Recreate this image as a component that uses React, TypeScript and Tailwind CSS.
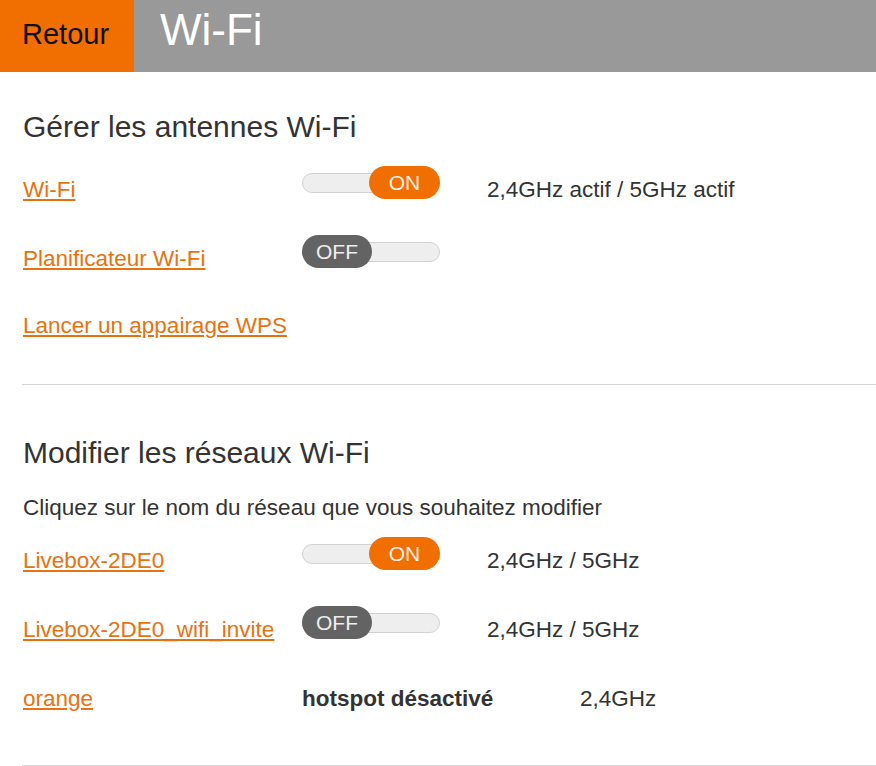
import React from "react";

function Toggle({ on }: { on: boolean }) {
  return (
    <div className="relative w-[138px] h-[33px] shrink-0">
      <div className="absolute left-0 right-0 top-[7px] h-[20px] rounded-full bg-[#eeeeee] border border-[#d2d2d2]" />
      {on ? (
        <div className="absolute right-0 top-0 w-[71px] h-[33px] rounded-full bg-[#f16e00] flex items-center justify-center text-[21px] leading-none text-[#fdf0e6]">
          ON
        </div>
      ) : (
        <div className="absolute left-0 top-0 w-[70px] h-[33px] rounded-full bg-[#636363] flex items-center justify-center text-[21px] leading-none text-[#eeeeee]">
          OFF
        </div>
      )}
    </div>
  );
}

function LinkText({ children }: { children: React.ReactNode }) {
  return (
    <a href="#" className="text-[#e8720f] underline text-[22.5px] leading-[26px] whitespace-nowrap">
      {children}
    </a>
  );
}

function ToggleRow({
  label,
  on,
  info,
  h,
}: {
  label: string;
  on: boolean;
  info?: string;
  h: string;
}) {
  return (
    <div className={`flex items-start ${h}`}>
      <div className="w-[279px] shrink-0 mt-[11px]">
        <LinkText>{label}</LinkText>
      </div>
      <Toggle on={on} />
      {info && (
        <div className="ml-[47px] mt-[11px] text-[22.5px] leading-[26px] text-[#333333] whitespace-nowrap">
          {info}
        </div>
      )}
    </div>
  );
}

export default function App() {
  return (
    <div
      className="w-[876px] h-[766px] bg-white overflow-hidden text-[#333333]"
      style={{ fontFamily: '"Liberation Sans", Arial, sans-serif' }}
    >
      <header className="flex h-[72px] bg-[#999999]">
        <div className="w-[134px] h-full bg-[#f16e00] pl-[22px] pt-[20px] text-[29px] leading-none text-[#111111]">
          Retour
        </div>
        <div className="pl-[26px] pt-[8px] text-[44px] leading-none text-white">Wi-Fi</div>
      </header>

      <div className="pl-[23px]">
        <h2 className="mt-[40px] text-[30px] leading-none font-normal text-[#333333]">
          Gérer les antennes Wi-Fi
        </h2>

        <div className="mt-[24px]">
          <ToggleRow label="Wi-Fi" on={true} info="2,4GHz actif / 5GHz actif" h="h-[69px]" />
          <ToggleRow label="Planificateur Wi-Fi" on={false} h="h-[67px]" />
          <div className="h-[82px] pt-[11px]">
            <LinkText>Lancer un appairage WPS</LinkText>
          </div>
        </div>

        <div className="h-px bg-[#d4d4d4] -ml-px" />

        <h2 className="mt-[53px] text-[30px] leading-none font-normal text-[#333333]">
          Modifier les réseaux Wi-Fi
        </h2>
        <p className="mt-[27px] text-[22.5px] leading-[26px] text-[#333333] whitespace-nowrap">
          Cliquez sur le nom du réseau que vous souhaitez modifier
        </p>

        <div className="mt-[16px]">
          <ToggleRow label="Livebox-2DE0" on={true} info="2,4GHz / 5GHz" h="h-[69px]" />
          <ToggleRow label="Livebox-2DE0_wifi_invite" on={false} info="2,4GHz / 5GHz" h="h-[69px]" />
          <div className="flex items-start h-[90px] pt-[11px]">
            <div className="w-[279px] shrink-0">
              <LinkText>orange</LinkText>
            </div>
            <div className="w-[278px] shrink-0 text-[22.5px] leading-[26px] font-bold text-[#333333] whitespace-nowrap">
              hotspot désactivé
            </div>
            <div className="text-[22.5px] leading-[26px] text-[#333333]">2,4GHz</div>
          </div>
        </div>

        <div className="h-px bg-[#d4d4d4] -ml-px" />
      </div>
    </div>
  );
}
